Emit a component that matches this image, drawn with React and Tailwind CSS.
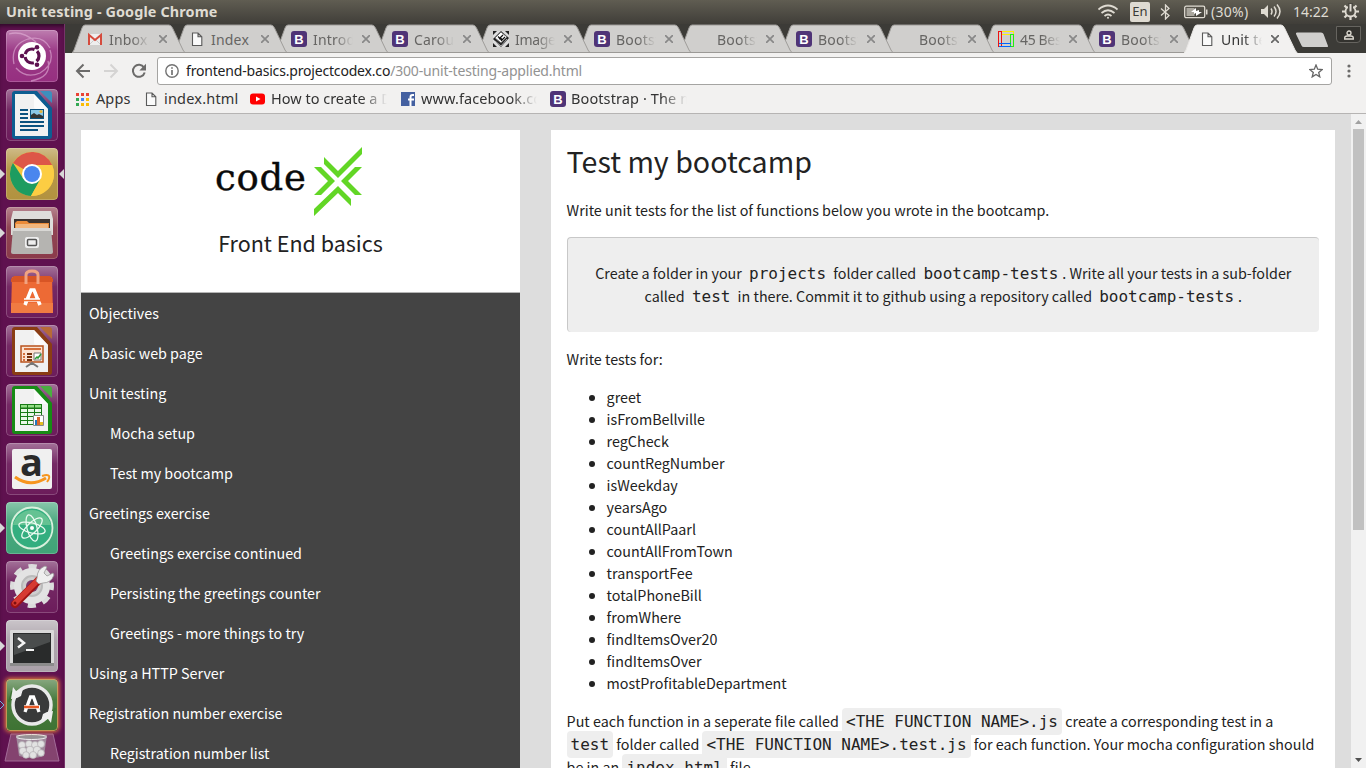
import React from "react";

const TABS = [
  ["gmail", "Inbox ("], ["doc", "Index"], ["boot", "Introd"], ["boot", "Carous"], ["image", "Images"], ["boot", "Bootst"],
  ["none", "Bootst"], ["boot", "Bootst"], ["none", "Bootst"], ["squares", "45 Best"], ["boot", "Bootst"], ["doc", "Unit te"],
];

const NAV = [
  ["Objectives", 0], ["A basic web page", 0], ["Unit testing", 0], ["Mocha setup", 1], ["Test my bootcamp", 1],
  ["Greetings exercise", 0], ["Greetings exercise continued", 1], ["Persisting the greetings counter", 1],
  ["Greetings - more things to try", 1], ["Using a HTTP Server", 0], ["Registration number exercise", 0], ["Registration number list", 1],
];

const FUNCTIONS = [
  "greet", "isFromBellville", "regCheck", "countRegNumber", "isWeekday", "yearsAgo", "countAllPaarl", "countAllFromTown",
  "transportFee", "totalPhoneBill", "fromWhere", "findItemsOver20", "findItemsOver", "mostProfitableDepartment",
];

function Favicon({ kind }) {
  if (kind === "boot")
    return (
      <span className="flex h-4 w-4 shrink-0 items-center justify-center rounded-[3px] bg-[#4f3477] font-['Liberation_Sans',sans-serif] text-[13px] leading-none font-bold text-white">B</span>
    );
  return (
    <svg className="h-4 w-4 shrink-0" viewBox="0 0 16 16">
      {kind === "gmail" && (
        <g>
          <path d="M1 3h14v11H1z" fill="#eee" />
          <path d="M3 13l5-5 5 5" fill="none" stroke="#ccc" />
          <path d="M2 14V4l6 5 6-5v10" fill="none" stroke="#d54b3d" strokeWidth="2" />
        </g>
      )}
      {kind === "doc" && (
        <path d="M3.500 2h5.500l3.800 3.800v8.700H3.500zM9 2v3.800h3.800" fill="#fafafa" stroke="#5a5a5a" strokeWidth="1.100" />
      )}
      {kind === "image" && (
        <g>
          <path d="M0 0h16v16H0z" fill="#ddd" />
          <path d="M0 0h4L0 4zM16 0v4l-4-4zM0 16v-4l4 4zM16 16h-4l4-4z" fill="#222" />
          <path d="M8 0l8 7-8 9-8-8z" fill="#222" />
          <path d="M8 1l6 5-6 6-6-5z" fill="#fff" stroke="#666" />
          <path d="M6 8l4-4M8 10l4-4M5 5.500l4 4M7 6.500l2 2" stroke="#111" strokeWidth="1.2" />
          <path d="M2 10l6 5 6-7" stroke="#aaa" fill="none" />
        </g>
      )}
      {kind === "squares" && (
        <g fill="none" shapeRendering="crispEdges">
          <path d="M3.500 .5h12v3h-12z" stroke="#fe0" />
          <path d="M.5 12.500h12v3h-12z" stroke="#06f" />
          <path d="M.5 .5h3v15h-3z" stroke="#e11" />
          <path d="M12.500 3.500h3v12h-3z" stroke="#2e1" />
          <path d="M.5 12.500h12M.5 15.500h12" stroke="#06f" />
        </g>
      )}
      {kind === "tube" && (
        <g>
          <rect x="0" y="2.500" width="15" height="11" rx="3" fill="#f00" />
          <path d="M6 5.500l4.500 2.500-4.500 2.500z" fill="#fff" />
        </g>
      )}
      {kind === "fb" && (
        <g>
          <path d="M1 1h14v14H1z" fill="#4460a0" />
          <path d="M10.500 15V9.500M10.500 10V6q0-2 2-2h1.500M8 8.600h6" stroke="#fff" strokeWidth="2" fill="none" />
        </g>
      )}
    </svg>
  );
}

const FADE = "[mask-image:linear-gradient(to_right,black_55%,transparent)]";

function Tab({ kind, label, active, first, z }) {
  const edge = active || first;
  return (
    <div className={`relative flex h-[29px] shrink-0 items-center pt-px ${first ? "w-[102px]" : "w-[101px]"} ${edge || kind === "doc" ? "pl-[15px]" : "pl-[16px]"}`} style={{ zIndex: z }}>
      <svg className="absolute top-0 left-0 h-[29px] w-[114px]" viewBox="0 0 114 29">
        <path d="M0 29Q1.500 27 2 26L10 4Q11 1 13 1H97Q99 1 100.500 4L111 26Q112 28 113.500 29z" fill={active ? "#f2f1f0" : "#d0cfcd"} />
        <path d="M0 29Q1.500 27 2 26L10 4Q11 1 13 1H97Q99 1 100.500 4L111 26Q112 28 113.500 29" fill="none" stroke={active ? "#e9e7e5" : "#9f9d9a"} strokeWidth="1" />
        {!active && <path d="M0 28.500H114" stroke="#9b9996" />}
      </svg>
      <div className="relative flex items-center">
        <Favicon kind={kind} />
        <span className={`ml-[6px] overflow-hidden text-[14px] whitespace-nowrap ${kind === "image" || kind === "squares" ? "tracking-[-0.35px]" : "tracking-[0.2px]"} ${edge || kind === "doc" ? "w-[41px]" : "w-[40px]"} ${label === "Index" ? "" : FADE} ${active ? "text-[#333]" : "text-[#666563]"}`}>{label}</span>
        <svg className="ml-[8.5px] h-2 w-2" viewBox="0 0 8 8"><path d="M0 0l8 8M8 0L0 8" stroke={active ? "#666" : "#888"} strokeWidth="1.7" /></svg>
      </div>
    </div>
  );
}

function Bookmark({ kind, label, className, fade }) {
  return (
    <div className={`flex shrink-0 items-center gap-[5px] ${className}`}>
      <Favicon kind={kind} />
      <span className={`flex-1 overflow-hidden whitespace-nowrap ${fade ? "[mask-image:linear-gradient(to_right,black_78%,transparent)]" : ""}`}>{label}</span>
    </div>
  );
}

function LibreDoc({ dark, light, children }) {
  return (
    <g>
      <path d="M9 2h22l15 17v28q0 3-3 3H9q-3 0-3-3V5q0-3 3-3z" fill={dark} />
      <path d="M34 2h9q3 0 3 3v9z" fill={light} />
      <path d="M9 5h19l14 15v27H9z" fill="#f1f1f1" />
      <path d="M28 5l14 15H30q-2 0-2-2z" fill="#fff" opacity=".7" />
      {children}
    </g>
  );
}

const APPS = [
  {
    bg: "#962f80", art: (
      <g>
        <path d="M8 34Q4 15 22 9Q37 5 44 18M44 20Q49 34 34 43Q20 49 10 38M30 12Q16 0 3 4M42 31Q46 47 25 51" fill="none" stroke="#e3b3d8" strokeWidth="1.3" opacity=".6" />
        <circle cx="26" cy="26" r="14" fill="#fff" />
        <circle cx="26" cy="26" r="7" fill="none" stroke="#5d1150" strokeWidth="3.200" strokeDasharray="11.700 3" strokeDashoffset="-9" />
        <circle cx="16" cy="26" r="2.300" fill="#5d1150" /><circle cx="31" cy="17.300" r="2.300" fill="#5d1150" /><circle cx="31" cy="34.700" r="2.300" fill="#5d1150" />
      </g>
    ),
  },
  {
    bg: "#6c1c5b", art: (
      <LibreDoc dark="#0d5d91" light="#3d8fbd">
        <path d="M14 21h8M14 25h8M14 29h8M14 33h24M14 37h24M14 41h18" stroke="#0b527f" strokeWidth="2" />
        <path d="M24 20h14v10H24z" fill="#0b527f" /><path d="M25 21h12v8H25z" fill="#8ac6e6" />
        <path d="M25 29v-3l3-2 3 2 2-1 4 2v2z" fill="#333" /><circle cx="35" cy="22.500" r="1.600" fill="#e6b53c" />
      </LibreDoc>
    ),
  },
  {
    bg: "#b2923f", left: 1, right: 1, art: (
      <g>
        <circle cx="26" cy="26" r="22" fill="#f5c63c" />
        <path d="M26 26L6.950 15A22 22 0 0 1 46.100 17H26z" fill="#dd5648" />
        <path d="M6.950 15A22 22 0 0 0 25 48L34.500 31 26 26 17.500 31 7 15z" fill="#1d9c60" />
        <path d="M46.100 17H26l8.500 14L25 48A22 22 0 0 0 46.100 17z" fill="#fccd43" />
        <circle cx="26" cy="26" r="10" fill="#fff" /><circle cx="26" cy="26" r="8" fill="#4a86ee" />
      </g>
    ),
  },
  {
    bg: "#8a3a4a", left: 1, art: (
      <g>
        <path d="M7 4h38l2 8v16H5V12z" fill="#deddda" /><path d="M8 12h36v11H8z" fill="#3b332f" />
        <path d="M9 16l2-2h10l2 2h20v7H9z" fill="#ea8b39" /><path d="M10 18h32M10 20h32" stroke="#f7e2c4" />
        <path d="M7 21h38l2 24q0 2-2 2H7q-2 0-2-2z" fill="#b5b4b1" /><path d="M7 21h38v3H7z" fill="#d8d7d4" />
        <rect x="19" y="30" width="14" height="11" rx="2" fill="#eee" /><rect x="21.500" y="32.500" width="9" height="6" rx="1" fill="#eee" stroke="#555" strokeWidth="1.500" />
      </g>
    ),
  },
  {
    bg: "#6c1c5b", art: (
      <g>
        <path d="M6 11h40l1 36H5z" fill="#ed6a35" /><path d="M5 13l3-3h36l3 3v3H5z" fill="#d85525" /><path d="M5 37h42v10H5z" fill="#f07b42" />
        <path d="M20 18V9q0-4 6-4t6 4v9" fill="none" stroke="#f1a381" strokeWidth="3" />
        <path d="M19 39l6-15h3l6 15M18 34h16" fill="none" stroke="#fff" strokeWidth="3.500" /><path d="M17 34.500h18" stroke="#f07036" strokeWidth="1.500" />
      </g>
    ),
  },
  {
    bg: "#6c1c5b", art: (
      <LibreDoc dark="#8a3d14" light="#b76a37">
        <path d="M15 21h22v16H15z" fill="#fbe4d3" stroke="#b9531e" strokeWidth="1.500" />
        <path d="M18 24h17" stroke="#d5703b" strokeWidth="2" /><path d="M17 29h2M17 32h2M17 35h2" stroke="#d5703b" strokeWidth="2" /><path d="M21 29h5M21 32h5M21 35h5" stroke="#76320d" strokeWidth="2" />
        <path d="M28 28h7v7h-7z" fill="#fff" stroke="#777" /><path d="M29 34l2-2 1 1 3-4" fill="none" stroke="#2b9b35" strokeWidth="1.500" />
        <path d="M26 38v2M20 42l6-4 6 4" stroke="#777" strokeWidth="2" fill="none" />
      </LibreDoc>
    ),
  },
  {
    bg: "#6c1c5b", art: (
      <LibreDoc dark="#178b15" light="#4aae40">
        <path d="M14 20h22v21H14z" fill="#187a15" />
        <path d="M15 21h6v2.500h-6zM22 21h6v2.500h-6zM29 21h6v2.500h-6z" fill="#93dd86" />
        <path d="M15 25h6v3h-6zM22 25h6v3h-6zM29 25h6v3h-6zM15 29h6v3h-6zM22 29h6v3h-6zM29 29h6v3h-6zM15 33h6v3h-6zM22 33h6v3h-6zM15 37h6v3h-6zM22 37h6v3h-6z" fill="#eaf8e7" />
        <path d="M27.500 31.500h10v10h-10z" fill="#fff" stroke="#888" />
        <path d="M29 36h2v5h-2z" fill="#2277bd" /><path d="M31 33h3v8h-3z" fill="#d9662a" /><path d="M34 38h3v3h-3z" fill="#e5bd20" />
      </LibreDoc>
    ),
  },
  {
    bg: "#6c1c5b", art: (
      <g>
        <rect x="6" y="6" width="40" height="40" rx="2" fill="#f0f0f0" />
        <text x="25.500" y="33" textAnchor="middle" fill="#2a2a2a" fontFamily="Open Sans, sans-serif" fontWeight="700" fontSize="38">a</text>
        <path d="M9 34q15 11 31 1" fill="none" stroke="#f6951f" strokeWidth="3" /><path d="M36 33q6-2 7 0t-2 6" fill="none" stroke="#f6951f" strokeWidth="2" />
      </g>
    ),
  },
  {
    bg: "#40a377", left: 1, art: (
      <g>
        <circle cx="26" cy="26" r="20.500" fill="#33ae7f" stroke="#d8f0dc" strokeWidth="1.800" />
        <path d="M7 23a19.500 19.500 0 0 1 38 0z" fill="#85cf9f" opacity=".6" />
        <g fill="none" stroke="#eafaf0" strokeWidth="1.300">
          <ellipse cx="26" cy="26" rx="13.500" ry="5" transform="rotate(15 26 26)" /><ellipse cx="26" cy="26" rx="13.500" ry="5" transform="rotate(75 26 26)" /><ellipse cx="26" cy="26" rx="13.500" ry="5" transform="rotate(135 26 26)" />
        </g>
        <circle cx="26" cy="26" r="2" fill="#fff" />
      </g>
    ),
  },
  {
    bg: "#6c1c5b", art: (
      <g>
        <circle cx="26" cy="25" r="19" fill="none" stroke="#dcdcdc" strokeWidth="6" strokeDasharray="8 6.920" strokeDashoffset="4" />
        <circle cx="26" cy="25" r="13.500" fill="none" stroke="#e3e3e3" strokeWidth="9" /><circle cx="26" cy="25" r="10" fill="#cfcfcf" stroke="#bbb" strokeWidth="2" /><circle cx="26" cy="25" r="6" fill="#7b3a6c" />
        <path d="M9 43L33 19" stroke="#9e1212" strokeWidth="8" strokeLinecap="round" /><path d="M9 42L33 18" stroke="#d63a32" strokeWidth="5.500" strokeLinecap="round" />
        <path d="M31 17q0-9 8-12l2 1-3 6 3 3 6-3 1 2q-3 8-11 8l-4 1-3-3z" fill="#efefef" stroke="#999" strokeWidth=".8" />
        <circle cx="9" cy="42" r="1.500" fill="#7d0e0e" />
      </g>
    ),
  },
  {
    bg: "#aaa1a9", left: 1, art: (
      <g>
        <rect x="4" y="10" width="44" height="36" rx="1" fill="#dadada" /><rect x="4" y="43" width="44" height="3" fill="#8b8b8b" />
        <rect x="7" y="13" width="38" height="30" fill="#292b2b" /><path d="M8 14h36v8L8 35z" fill="#4a4d4d" />
        <path d="M12 18l6 5-6 4.500" stroke="#f4f4f4" strokeWidth="2.500" fill="none" /><path d="M20 30h8" stroke="#f4f4f4" strokeWidth="2" />
      </g>
    ),
  },
  {
    bg: "#3e7333", hollow: 1, glow: 1, art: (
      <g>
        <circle cx="26" cy="26" r="19" fill="#393a3a" stroke="#e9e9e9" strokeWidth="3.500" />
        <path d="M3 23l3-10 4 2M49 29l-3 10-4-2" stroke="#3e7333" strokeWidth="2" fill="none" />
        <path d="M5 20l2-12 3 4 7-2-2 7-4 2zM47 32l-2 12-3-4-7 2 2-7 4-2z" fill="#eee" />
        <path d="M19 33l5.500-15h3L33 33M18 28h16" fill="none" stroke="#fff" strokeWidth="3.300" /><path d="M18 28h15" stroke="#e95a25" strokeWidth="2.500" />
      </g>
    ),
  },
];

function Launcher() {
  return (
    <aside className="flex h-[744px] w-[65px] shrink-0 flex-col items-center gap-[7px] overflow-hidden border-r border-[#77336a] bg-[#5f114f] pt-[6px] pr-px shadow-[inset_0_4px_4px_-2px_#2c0826]">
      {APPS.map((app, i) => (
        <div key={i} className="relative h-[52px] w-[52px] shrink-0">
          <svg viewBox="0 0 52 52" className={`h-[52px] w-[52px] rounded-[4px] ${app.glow ? "shadow-[0_0_4px_1px_#e8803c]" : ""}`}>
            <defs>
              <linearGradient id={`sheen${i}`} x1="0" y1="0" x2="0" y2="1">
                <stop offset="0" stopColor="#fff" stopOpacity=".38" /><stop offset=".4" stopColor="#fff" stopOpacity=".06" /><stop offset="1" stopColor="#fff" stopOpacity="0" />
              </linearGradient>
            </defs>
            <rect width="52" height="52" rx="4" fill={app.bg} />
            <rect width="52" height="52" rx="4" fill={`url(#sheen${i})`} />
            <rect x=".5" y=".5" width="51" height="51" rx="3.500" fill="none" stroke={app.glow ? "#e2a05c" : "#fff"} strokeOpacity={app.glow ? ".8" : ".2"} />
            {app.art}
          </svg>
          {app.left && <svg className="absolute top-[21px] -left-[6px] h-[10px] w-[5px]" viewBox="0 0 5 10"><path d="M0 0l5 5-5 5z" fill="#d8d8d8" /></svg>}
          {app.hollow && <svg className="absolute top-[21px] -left-[6px] h-[10px] w-[5px]" viewBox="0 0 5 10"><path d="M0 1l4 4-4 4" fill="none" stroke="#6cb4e0" /></svg>}
          {app.right && <svg className="absolute top-[21px] -right-[6px] h-[10px] w-[5px]" viewBox="0 0 5 10"><path d="M5 0L0 5l5 5z" fill="#d8d8d8" /></svg>}
        </div>
      ))}
      <svg className="-mt-[5px] h-[36px] w-[56px] shrink-0" viewBox="0 0 56 36">
        <path d="M7 1h42l6 27H1z" fill="#84436f" stroke="#a36b98" />
        <path d="M12 2h31l-3 21q-12 4-25 0z" fill="#a08a9c" /><ellipse cx="27.500" cy="4" rx="15" ry="2.500" fill="#969296" stroke="#f1f1f1" />
        <g fill="#e2e2e2" stroke="#b5b0b4" strokeWidth=".7">
          <circle cx="18" cy="12" r="3.500" /><circle cx="25" cy="11" r="3.500" /><circle cx="31" cy="12" r="3.500" /><circle cx="37" cy="11" r="3.500" />
          <circle cx="19" cy="18" r="3.800" /><circle cx="26" cy="17" r="3.800" /><circle cx="33" cy="17" r="3.800" /><circle cx="37" cy="20" r="3.300" />
          <circle cx="22" cy="22" r="3.300" /><circle cx="29" cy="22" r="3.500" />
        </g>
      </svg>
    </aside>
  );
}

function SystemBar() {
  const c = "#dfdbd2";
  return (
    <header className="flex h-6 shrink-0 items-center justify-between bg-linear-to-b from-[#605d52] to-[#403e39] pr-[7px] pb-px pl-[6px] text-[#dfdbd2]">
      <span className="text-[14.4px] font-bold tracking-[0.12px]">Unit testing - Google Chrome</span>
      <div className="flex items-center text-[14px]">
        <svg className="h-4 w-5" viewBox="0 0 20 16" fill="none" stroke={c} strokeWidth="1.700"><path d="M.5 5.500q9.500-8 19 0M3.500 9q6.500-5.500 13 0M6.500 12q3.500-3 7 0" /><circle cx="10" cy="13.800" r="1" fill={c} stroke="none" /></svg>
        <span className="ml-[12px] flex h-5 w-5 items-center justify-center rounded-[2px] bg-[#dfdbd2] text-[13px] text-[#3c3b37]">En</span>
        <svg className="ml-[10px] h-4 w-[11px]" viewBox="0 0 11 16" fill="none" stroke={c} strokeWidth="1.300"><path d="M1 4.500l8 7L5.500 15V1L9 4.500l-8 7" /></svg>
        <svg className="ml-[13px] h-[14px] w-6" viewBox="0 0 24 14"><rect x=".7" y="1.200" width="20" height="11.500" rx="1.500" fill="none" stroke={c} strokeWidth="1.300" /><path d="M22 4.500h1.500v5H22z" fill={c} /><path d="M2.500 3h8v8h-8z" fill="#aaa79e" /><path d="M7 7l5-4v3l3-1v2h3l-6 4V8l-2 1V7z" fill="#fff" /></svg>
        <span className="ml-[3px] w-[38px] tracking-[0.3px]">(30%)</span>
        <svg className="ml-[12px] h-[15px] w-5" viewBox="0 0 20 15" fill="none" stroke={c} strokeWidth="1.500"><path d="M0 5h3l4-4v13l-4-4H0z" fill={c} stroke="none" /><path d="M10 4.500q2 3 0 6M13 2.500q4 5 0 10M16 .5q6 7 0 14" /></svg>
        <span className="ml-[12px] w-[36px]">14:22</span>
        <svg className="ml-[13px] h-[17px] w-[17px]" viewBox="0 0 17 17" fill="none" stroke={c}><circle cx="8.500" cy="8.500" r="5" strokeWidth="1.800" /><path d="M13.500 8.500H17M0 8.500h3.500M8.500 13.500V17M12 12l2.500 2.500M5 12l-2.500 2.500M12 5l2.500-2.500M5 5L2.500 2.500" strokeWidth="2.200" /><path d="M8.500 0v9" stroke="#4b4942" strokeWidth="5" /><path d="M8.500 1v7.500" strokeWidth="2" /></svg>
      </div>
    </header>
  );
}

function Chrome() {
  const dots = ["#ea4335", "#ea4335", "#ea4335", "#34a853", "#4285f4", "#fbbc05", "#34a853", "#fbbc05", "#fbbc05"];
  return (
    <div className="shrink-0">
      <div className="flex h-[29px] bg-[#3c3b37] pl-[7px]">
        {TABS.map(([kind, label], i) => (
          <Tab key={i} kind={kind} label={label} active={i === 11} first={i === 0} z={i === 11 ? 30 : 20 - i} />
        ))}
        <svg className="mt-2 ml-[10px] h-4 w-[34px] shrink-0" viewBox="0 0 34 16"><path d="M2 .5h24q2 0 2.500 1.500l4.500 12q.5 1-1 1H9q-2 0-2.500-1.500L1 2Q.5 .5 2 .5z" fill="#d0cfcd" /></svg>
        <div className="mt-[2px] ml-[7px] flex h-[17px] w-[25px] shrink-0 items-center justify-center rounded-b-[4px] border border-[#66645f] bg-[#33322e]">
          <svg className="h-[10px] w-[10px]" viewBox="0 0 10 10" fill="none" stroke="#dfdbd2" strokeWidth="1.300"><circle cx="5" cy="3" r="2" /><path d="M.7 9V8q0-2 2.500-2h3.600q2.500 0 2.500 2v1z" /></svg>
        </div>
      </div>
      <div className="flex h-[35px] items-center bg-[#f2f1f0] pt-px pr-[14px] pl-[10px]">
        <svg className="h-4 w-4" viewBox="0 0 16 16" fill="none" stroke="#6c6b6a" strokeWidth="2"><path d="M15 8H2M8.500 1.500L2 8l6.500 6.500" /></svg>
        <svg className="ml-[12px] h-4 w-4" viewBox="0 0 16 16" fill="none" stroke="#d5d4d3" strokeWidth="2"><path d="M1 8h13M7.500 1.500L14 8l-6.500 6.500" /></svg>
        <svg className="ml-[12px] h-4 w-4" viewBox="0 0 16 16"><path d="M13 4.600A6 6 0 1 0 13.700 9.500" fill="none" stroke="#6c6b6a" strokeWidth="2" /><path d="M15 .8v6.700H8.300z" fill="#6c6b6a" /></svg>
        <div className="ml-[10px] flex h-7 flex-1 items-center rounded-[3px] border border-[#a5a4a2] bg-white pr-2 pl-[7px]">
          <svg className="h-[14px] w-[14px]" viewBox="0 0 14 14" fill="none" stroke="#737373" strokeWidth="1.400"><circle cx="7" cy="7" r="6.200" /><path d="M7 3.200v1.500M7 6v5" strokeWidth="1.700" /></svg>
          <span className="ml-[7px] flex-1 pb-px text-[14px] tracking-[-0.18px] text-[#222]">frontend-basics.projectcodex.co<span className="text-[#929292]">/300-unit-testing-applied.html</span></span>
          <svg className="h-[14px] w-[14px]" viewBox="0 0 14 14"><path d="M7 1l1.700 4.200 4.500.3-3.500 3 1.100 4.400L7 10.500l-3.800 2.400 1.100-4.400-3.500-3 4.500-.3z" fill="none" stroke="#666" strokeWidth="1.300" /></svg>
        </div>
        <svg className="ml-[15.5px] h-4 w-[5px]" viewBox="0 0 5 16" fill="#6c6b6a"><circle cx="2" cy="3" r="1.600" /><circle cx="2" cy="8" r="1.600" /><circle cx="2" cy="13" r="1.600" /></svg>
      </div>
      <div className="flex h-[26px] items-center border-b border-[#b6b4b3] bg-[#f2f1f0] pb-[3px] pl-[11px] text-[14.5px] text-[#333]">
        <div className="grid shrink-0 grid-cols-3 gap-[2px]">
          {dots.map((d, i) => <i key={i} className="h-[3px] w-[3px]" style={{ background: d }} />)}
        </div>
        <span className="ml-[7px] w-[36px] shrink-0 tracking-[0.1px]">Apps</span>
        <Bookmark kind="doc" label="index.html" className="ml-[11px] w-[96px] tracking-[0.2px]" />
        <Bookmark kind="tube" label="How to create a Dy" className="ml-[11px] w-[137px]" fade />
        <Bookmark kind="fb" label="www.facebook.com" className="ml-[13px] w-[137px] tracking-[0.1px]" fade />
        <Bookmark kind="boot" label="Bootstrap · The mo" className="ml-[13px] w-[137px] tracking-[0.1px]" fade />
      </div>
    </div>
  );
}

function Code({ children, plain }) {
  return <code className={`rounded-[4px] p-1 font-['DejaVu_Sans_Mono',monospace] text-[16px] ${plain ? "" : "bg-[#eee]"}`}>{children}</code>;
}

export default function App() {
  return (
    <div className="flex h-[768px] w-[1366px] flex-col overflow-hidden bg-[#ddd] font-['Noto_Sans',sans-serif]">
      <SystemBar />
      <div className="flex min-h-0 flex-1">
        <Launcher />
        <div className="flex w-[1301px] flex-col">
          <Chrome />
          <div className="flex min-h-0 flex-1 font-['Noto_Sans_CJK_SC',sans-serif] text-[14.32px] text-[#222]">
            <div className="flex min-w-0 flex-1 gap-[31px] overflow-hidden pt-4 pr-4 pl-4">
              <nav className="h-[700px] w-[439px] shrink-0 bg-[#444] text-white">
                <div className="flex h-[163px] flex-col items-center border-b border-[#b5b5b5] bg-white text-[#222]">
                  <svg className="mt-4 mr-[22px] h-[72px] w-[148px]" viewBox="0 0 148 72">
                    <text x="-1" y="44" textLength="91" fontFamily="DejaVu Serif, serif" fontSize="37" fill="#0a0a0a" stroke="#0a0a0a" strokeWidth=".4">code</text>
                    <g fill="#62d625">
                      <path d="M108 11v7l14 14 24-24V1l-24 24z" />
                      <path d="M98 21h7l14 14-14 14h-7l14-14z" />
                      <path d="M146 21h-7l-14 14 14 14h7l-14-14z" />
                      <path d="M98 70v-7l24-23 13 13v7l-13-13z" />
                    </g>
                  </svg>
                  <div className="mt-[9px] text-[21.5px] leading-8 whitespace-nowrap">Front End basics</div>
                </div>
                {NAV.map(([label, depth]) => (
                  <div key={label} className={`flex h-10 items-center ${depth ? "pl-[29px]" : "pl-2"}`}>{label}</div>
                ))}
              </nav>
              <main className="h-[700px] w-[784px] shrink-0 bg-white pr-4 pl-[15.6px] leading-[23px] whitespace-nowrap">
                <h1 className="pt-[11px] text-[28.6px] leading-[40px]">Test my bootcamp</h1>
                <p className="mt-[17px]">Write unit tests for the list of functions below you wrote in the bootcamp.</p>
                <div className="mt-[16px] h-[95px] rounded-[4px] border-t border-l border-[#c8c8c8] bg-[#eee] pt-[23px] text-center">
                  <p className="h-[23px]">Create a folder in your <Code plain>projects</Code> folder called <Code plain>bootcamp-tests</Code>. Write all your tests in a sub-folder</p>
                  <p className="h-[23px]">called <Code plain>test</Code> in there. Commit it to github using a repository called <Code plain>bootcamp-tests</Code>.</p>
                </div>
                <p className="mt-[15px]">Write tests for:</p>
                <ul className="mt-[16px] list-disc pl-10 leading-[22px]">
                  {FUNCTIONS.map((f) => <li key={f}>{f}</li>)}
                </ul>
                <div className="mt-[15px]">
                  <p className="h-[23px]">Put each function in a seperate file called <Code>{"<THE FUNCTION NAME>.js"}</Code> create a corresponding test in a</p>
                  <p className="h-[23px]"><Code>test</Code> folder called <Code>{"<THE FUNCTION NAME>.test.js"}</Code> for each function. Your mocha configuration should</p>
                  <p className="h-[23px]">be in an <Code>index.html</Code> file.</p>
                </div>
              </main>
            </div>
            <div className="flex w-[15px] shrink-0 flex-col items-center bg-[#f1f1f1]">
              <svg className="h-[15px] w-[15px] shrink-0" viewBox="0 0 15 15"><path d="M4 10l3.500-4L11 10z" fill="#a0a0a0" /></svg>
              <div className="h-[401px] w-[11px] shrink-0 bg-[#c1c1c1]" />
              <svg className="mt-auto h-[15px] w-[15px] shrink-0" viewBox="0 0 15 15"><path d="M4 5l3.500 4L11 5z" fill="#505050" /></svg>
            </div>
          </div>
        </div>
      </div>
    </div>
  );
}
